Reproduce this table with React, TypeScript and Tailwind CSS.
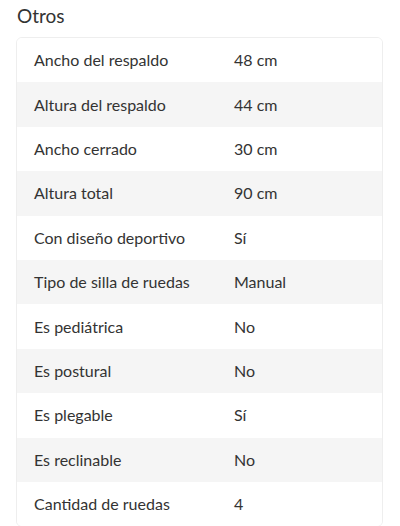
import React from "react";

const rows: [string, string][] = [
  ["Ancho del respaldo", "48 cm"],
  ["Altura del respaldo", "44 cm"],
  ["Ancho cerrado", "30 cm"],
  ["Altura total", "90 cm"],
  ["Con diseño deportivo", "Sí"],
  ["Tipo de silla de ruedas", "Manual"],
  ["Es pediátrica", "No"],
  ["Es postural", "No"],
  ["Es plegable", "Sí"],
  ["Es reclinable", "No"],
  ["Cantidad de ruedas", "4"],
];

export default function App() {
  return (
    <div className="w-[400px] h-[526px] overflow-hidden bg-white font-['Lato','Liberation_Sans',sans-serif] text-[#333]">
      <h2 className="pl-[17px] pt-[3px] h-[37px] text-[19px] leading-[26px] text-[#333]">Otros</h2>
      <div className="ml-[16px] w-[367px] rounded-[6px] border border-[#eeeeee] overflow-hidden">
        {rows.map(([label, value], i) => (
          <div
            key={label}
            className={
              "grid grid-cols-[200px_1fr] items-center h-[44.4px] pl-[17px] text-[16px] " +
              (i % 2 === 1 ? "bg-[#f5f5f5]" : "bg-white")
            }
          >
            <span>{label}</span>
            <span>{value}</span>
          </div>
        ))}
      </div>
    </div>
  );
}
